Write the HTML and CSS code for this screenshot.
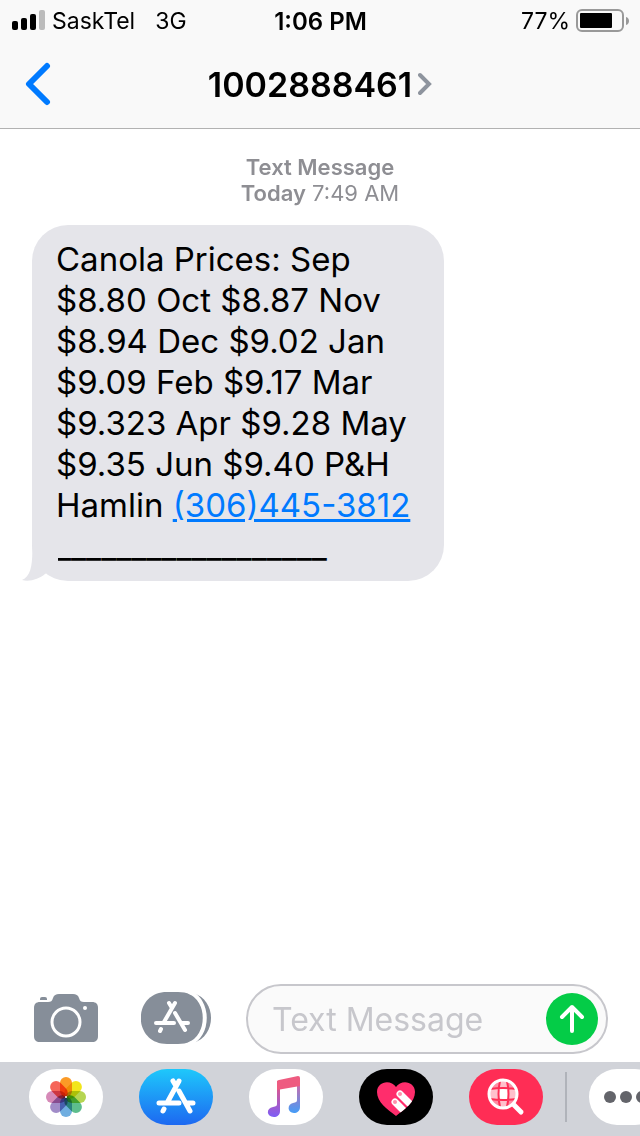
FILE: index.html
```html
<!DOCTYPE html>
<html lang="en">
<head>
  <meta charset="UTF-8">
  <meta name="viewport" content="width=device-width, initial-scale=1.0">
  <title>Messages</title>
  <link rel="stylesheet" href="styles.css">
</head>
<body>
  <header class="header">
    <div class="status">
      <div class="status-left">
        <svg class="signal" width="34" height="22" viewBox="0 0 34 22">
          <rect x="0" y="11" width="6" height="9" rx="2"/>
          <rect x="9" y="8" width="6" height="12" rx="2"/>
          <rect x="18" y="4" width="6" height="16" rx="2"/>
          <rect x="27" y="0" width="6" height="20" rx="2" fill="#bbb"/>
        </svg>
        <span>SaskTel</span>
        <span class="network">3G</span>
      </div>
      <div class="status-time">1:06 PM</div>
      <div class="status-right">
        <span>77%</span>
        <svg width="53" height="24" viewBox="0 0 53 24">
          <rect x="1" y="1" width="46" height="21" rx="5" fill="none" stroke="#999" stroke-width="2"/>
          <rect x="4" y="4" width="32" height="15" rx="1"/>
          <path d="M50 8c4 1 4 7 0 8z" fill="#999"/>
        </svg>
      </div>
    </div>
    <div class="nav">
      <button class="back" aria-label="Back">
        <svg width="26" height="44" viewBox="0 0 26 44"><path d="M22 4L4 22l18 18" fill="none" stroke="#007aff" stroke-width="6" stroke-linecap="round" stroke-linejoin="round"/></svg>
      </button>
      <button class="contact">
        1002888461
        <svg width="14" height="24" viewBox="0 0 14 24"><path d="M2 3l9 9-9 9" fill="none" stroke="#8e949e" stroke-width="4" stroke-linecap="round" stroke-linejoin="miter"/></svg>
      </button>
    </div>
  </header>

  <main class="messages">
    <div class="stamp"><b>Text Message</b><br><b>Today</b> 7:49 AM</div>
    <div class="bubble">
      Canola Prices: Sep<br>
      $8.80 Oct $8.87 Nov<br>
      $8.94 Dec $9.02 Jan<br>
      $9.09 Feb $9.17 Mar<br>
      $9.323 Apr $9.28 May<br>
      $9.35 Jun $9.40 P&amp;H<br>
      Hamlin <a href="tel:3064453812">(306)445-3812</a><br>
      __________________
      <svg class="tail" width="36" height="40" viewBox="0 0 36 40"><path d="M10 0C11 20 10 35 0 39c8 2 17-1 23-6L36 26V0z"/></svg>
    </div>
  </main>

  <form class="compose">
    <button type="button" class="camera" aria-label="Camera">
      <svg width="64" height="50" viewBox="0 0 64 50">
        <path d="M6 8h8c3 0 4-1 5-4 1-3 3-4 6-4h14c3 0 5 1 6 4 1 3 2 4 5 4h8c4 0 6 2 6 6v28c0 4-2 6-6 6H6c-4 0-6-2-6-6V14c0-4 2-6 6-6z" fill="#868e99"/>
        <path d="M6 6V5q0-2 2-2h3q2 0 2 2v1z" fill="#868e99"/>
        <circle cx="32" cy="28" r="14" fill="none" stroke="#fff" stroke-width="3"/>
        <circle cx="51" cy="14" r="2" fill="#fff"/>
      </svg>
    </button>
    <button type="button" class="apps" aria-label="Apps">
      <svg width="70" height="54" viewBox="0 0 70 54">
        <path d="M52 1c24 7 24 43 0 50 -4-13-4-37 0-50z" fill="#868e99"/>
        <path d="M26 0h11c36 0 36 52 0 52H26C-9 52-9 0 26 0z" fill="#868e99"/>
        <path d="M48 0c21 8 21 44 0 52" fill="none" stroke="#fff" stroke-width="4"/>
        <g fill="none" stroke="#fff" stroke-width="4" stroke-linecap="round">
          <path d="M28 11l3 5M34 11L23 30M15 31h18M41 31h6M34 21l10 17M20 37l-1 2"/>
        </g>
      </svg>
    </button>
    <div class="field">
      <input type="text" placeholder="Text Message" aria-label="Text Message">
      <button type="button" class="send" aria-label="Send">
        <svg width="52" height="52" viewBox="0 0 52 52"><path d="M26 38V14M16 24l10-10 10 10" fill="none" stroke="#fff" stroke-width="4" stroke-linecap="round" stroke-linejoin="round"/></svg>
      </button>
    </div>
  </form>

  <footer class="drawer">
    <button class="app" aria-label="Photos">
      <svg width="74" height="56" viewBox="0 0 74 56">
        <g class="petals">
          <rect x="31" y="8" width="12" height="20" rx="6" fill="#fb9a26"/>
          <rect x="31" y="8" width="12" height="20" rx="6" fill="#f2e61b" transform="rotate(45 37 28)"/>
          <rect x="31" y="8" width="12" height="20" rx="6" fill="#b5d552" transform="rotate(90 37 28)"/>
          <rect x="31" y="8" width="12" height="20" rx="6" fill="#5dbd8d" transform="rotate(135 37 28)"/>
          <rect x="31" y="8" width="12" height="20" rx="6" fill="#70aee0" transform="rotate(180 37 28)"/>
          <rect x="31" y="8" width="12" height="20" rx="6" fill="#a18cc8" transform="rotate(225 37 28)"/>
          <rect x="31" y="8" width="12" height="20" rx="6" fill="#d68ab8" transform="rotate(270 37 28)"/>
          <rect x="31" y="8" width="12" height="20" rx="6" fill="#f5655a" transform="rotate(315 37 28)"/>
        </g>
        <circle cx="37" cy="28" r="1" fill="#fff"/>
      </svg>
    </button>
    <button class="app app-store" aria-label="App Store">
      <svg width="74" height="56" viewBox="0 0 74 56">
        <g fill="none" stroke="#fff" stroke-width="5" stroke-linecap="round">
          <path d="M34 12l3 5M40 12L28 34M20 34h20M48 34h6M40 22l11 20M25 40l-1 2"/>
        </g>
      </svg>
    </button>
    <button class="app" aria-label="Music">
      <svg width="74" height="56" viewBox="0 0 74 56">
        <defs>
          <linearGradient id="stemLeft" x1="0" y1="0" x2="0" y2="1"><stop offset="0" stop-color="#ef5678"/><stop offset="1" stop-color="#7d5df6"/></linearGradient>
          <linearGradient id="stemRight" x1="0" y1="0" x2="0" y2="1"><stop offset="0" stop-color="#e9609b"/><stop offset="1" stop-color="#449df8"/></linearGradient>
        </defs>
        <path d="M28 12h3v30c0 4-3 6-6 6-8 0-8-9-1-10 3-1 4-1 4-3z" fill="url(#stemLeft)"/>
        <path d="M48 9h3v29c0 4-3 6-6 6-7 0-7-9-1-10 3-1 4-1 4-3z" fill="url(#stemRight)"/>
        <path d="M28 13q0-2 2-2l19-4q2 0 2 2v8l-23 4z" fill="#ee5b80"/>
      </svg>
    </button>
    <button class="app app-touch" aria-label="Digital Touch">
      <svg width="74" height="56" viewBox="0 0 74 56">
        <defs><clipPath id="heart"><path d="M37 47C28 40 18 33 18 23c0-11 14-13 19-5 5-8 19-6 19 5 0 10-10 17-19 24z"/></clipPath></defs>
        <g clip-path="url(#heart)">
          <path d="M10 5h54v48H10z" fill="#ff2d6c"/>
          <g stroke="#fff" stroke-width="7" stroke-linecap="round">
            <path d="M41 25l18 18M36 33l18 18"/>
          </g>
          <circle cx="41" cy="25" r="2" fill="#ff8fac"/>
          <circle cx="36" cy="33" r="2" fill="#ff8fac"/>
        </g>
      </svg>
    </button>
    <button class="app app-images" aria-label="Images">
      <svg width="74" height="56" viewBox="0 0 74 56">
        <circle cx="34" cy="25" r="14" fill="#ff8ba3"/>
        <path d="M30 12h9v8h-9zM21 20h9v10h-9zM39 20h9v10h-9zM30 30h9v8h-9z" fill="#ffc0cc"/>
        <path d="M30 20h9v10h-9z" fill="#fff"/>
        <path d="M31 12q-3 13 0 26M38 12q3 13 0 26M21 20q13-2 26 0M21 30q13 2 26 0" fill="none" stroke="#ff2d55" stroke-width="2"/>
        <circle cx="34" cy="25" r="14" fill="none" stroke="#fff" stroke-width="3"/>
        <path d="M45 36l7 7" stroke="#fff" stroke-width="5" stroke-linecap="round"/>
      </svg>
    </button>
    <div class="divider"></div>
    <button class="app" aria-label="More">
      <svg width="74" height="56" viewBox="0 0 74 56" fill="#63646a">
        <circle cx="21" cy="28" r="6"/>
        <circle cx="37" cy="28" r="6"/>
        <circle cx="53" cy="28" r="6"/>
      </svg>
    </button>
  </footer>
</body>
</html>
```

FILE: styles.css
```css
* {
  box-sizing: border-box;
}
body {
  font-family: Inter, "Liberation Sans", sans-serif;
  margin: 0;
  min-height: 100vh;
  display: flex;
  flex-direction: column;
  background-color: #fff;
  color: #000;
  overflow-x: hidden;
}
button {
  font: inherit;
  color: inherit;
  padding: 0;
  border: none;
  background: none;
  cursor: pointer;
  flex-shrink: 0;
}
svg {
  display: block;
}
.header {
  background-color: #f9f9f9;
  border-bottom: 1px solid #b2b2b2;
}
.status {
  display: grid;
  grid-template-columns: 1fr auto 1fr;
  align-items: center;
  height: 40px;
  padding: 2px 11px 0 12px;
  font-size: 23px;
}
.status-left,
.status-right {
  display: flex;
  align-items: center;
  gap: 6px;
}
.status-right {
  justify-content: flex-end;
}
.network {
  margin-left: 14px;
}
.status-time {
  font-size: 24px;
  font-weight: 600;
}
.nav {
  display: grid;
  grid-template-columns: 1fr auto 1fr;
  align-items: center;
  height: 88px;
  padding: 0 25px;
}
.back {
  justify-self: start;
}
.contact {
  display: flex;
  align-items: center;
  gap: 6px;
  font-size: 34px;
  font-weight: 600;
}
.messages {
  flex: 1;
  padding: 25px 32px;
}
.stamp {
  text-align: center;
  font-size: 22px;
  line-height: 26px;
  color: #8e8e93;
}
.stamp b {
  font-weight: 600;
}
.bubble {
  position: relative;
  width: fit-content;
  margin-top: 19px;
  padding: 14px 34px 14px 24px;
  border-radius: 36px;
  background-color: #e5e5ea;
  font-size: 33px;
  line-height: 41px;
}
.bubble a {
  color: #007aff;
}
.tail {
  position: absolute;
  left: -10px;
  bottom: 0;
  fill: #e5e5ea;
}
.compose {
  display: flex;
  align-items: center;
  padding: 8px 32px 8px 34px;
}
.apps {
  margin: 0 35px 0 43px;
}
.field {
  flex: 1;
  min-width: 0;
  height: 70px;
  display: flex;
  align-items: center;
  padding: 0 8px 0 24px;
  border: 2px solid #c7c7cc;
  border-radius: 35px;
  background-color: #fafafa;
}
.field input {
  flex: 1;
  min-width: 0;
  padding: 0;
  border: none;
  outline: none;
  background: none;
  font: inherit;
  font-size: 32px;
}
.field input::placeholder {
  color: #c7c7cc;
}
.send {
  border-radius: 50%;
  background-color: #04cc47;
}
.drawer {
  display: flex;
  align-items: center;
  gap: 36px;
  height: 74px;
  padding: 0 0 5px 29px;
  overflow: hidden;
  background-color: #d1d3d9;
}
.app {
  border-radius: 28px;
  background-color: #fff;
}
.app-store {
  background: linear-gradient(#1ec8fb, #1d68f1);
}
.app-touch {
  background-color: #000;
}
.app-images {
  background-color: #ff2d55;
}
.petals rect {
  mix-blend-mode: multiply;
}
.divider {
  flex-shrink: 0;
  width: 2px;
  height: 50px;
  margin: 0 -14px;
  background-color: #b0b3ba;
}
```
